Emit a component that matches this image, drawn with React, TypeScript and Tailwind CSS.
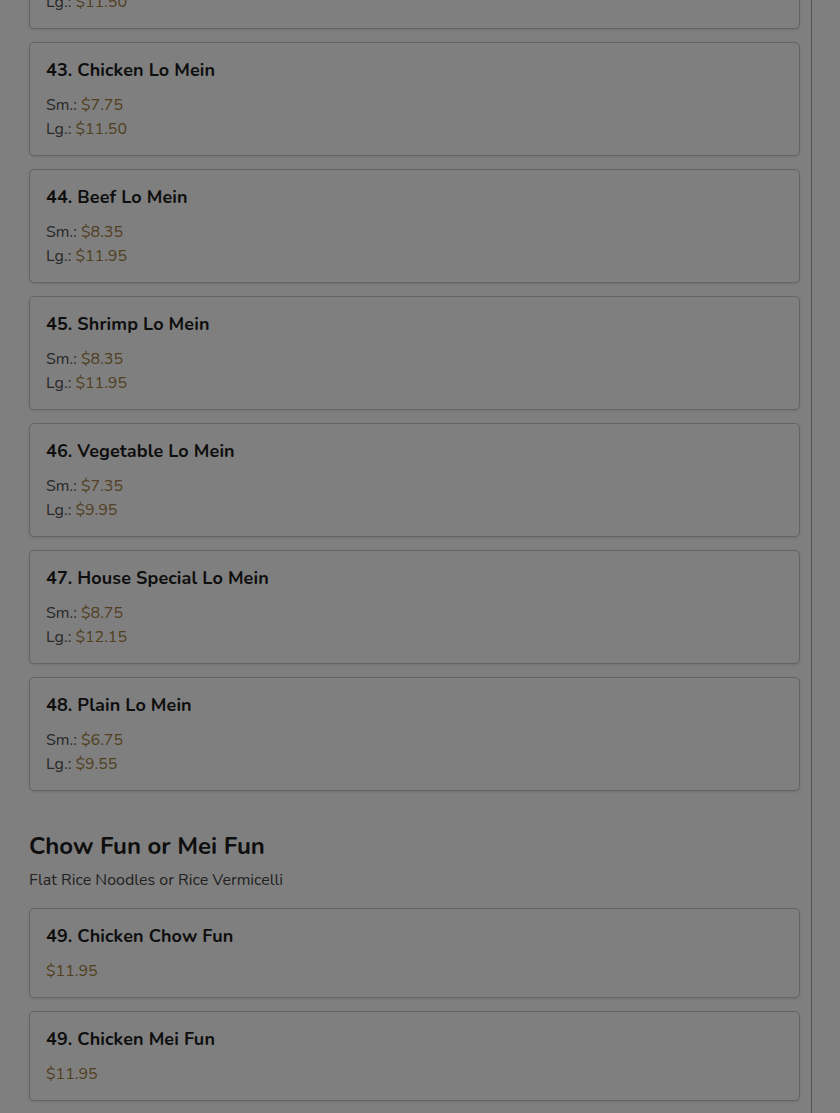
type Item = { name: string; sm?: string; lg?: string; price?: string };

const loMein: Item[] = [
  { name: '42. Roast Pork Lo Mein', sm: '$7.75', lg: '$11.50' },
  { name: '43. Chicken Lo Mein', sm: '$7.75', lg: '$11.50' },
  { name: '44. Beef Lo Mein', sm: '$8.35', lg: '$11.95' },
  { name: '45. Shrimp Lo Mein', sm: '$8.35', lg: '$11.95' },
  { name: '46. Vegetable Lo Mein', sm: '$7.35', lg: '$9.95' },
  { name: '47. House Special Lo Mein', sm: '$8.75', lg: '$12.15' },
  { name: '48. Plain Lo Mein', sm: '$6.75', lg: '$9.55' },
];

const chowFun: Item[] = [
  { name: '49. Chicken Chow Fun', price: '$11.95' },
  { name: '49. Chicken Mei Fun', price: '$11.95' },
];

function MenuCard({ item }: { item: Item }) {
  return (
    <div className="rounded-[5px] border border-[#c9c9c9] bg-white px-4 pt-[14px] pb-[14px] shadow-[0_1px_3px_rgba(0,0,0,0.12)]">
      <h3 className="text-[18px] leading-[26px] font-bold tracking-[0.1px] text-[#1c1c1c]">{item.name}</h3>
      <div className="mt-[10px] text-[16px] leading-[24px] text-[#505050]">
        {item.price ? (
          <div className="text-[#a3803f]">{item.price}</div>
        ) : (
          <>
            <div>
              Sm.: <span className="text-[#a3803f]">{item.sm}</span>
            </div>
            <div>
              Lg.: <span className="text-[#a3803f]">{item.lg}</span>
            </div>
          </>
        )}
      </div>
    </div>
  );
}

export default function App() {
  return (
    <div className="relative h-[1113px] overflow-hidden bg-white" style={{ fontFamily: 'Nunito, Lato, "Noto Sans", sans-serif' }}>
      <div className="flex h-full w-[812px] flex-col border-r border-[#aaa]">
        <div className="-mt-[85px] ml-[29px] w-[771px]">
          <div className="flex flex-col gap-[13px]">
            {loMein.map((item) => (
              <MenuCard key={item.name} item={item} />
            ))}
          </div>

          <h2 className="mt-[39px] text-[24px] leading-[32px] font-bold text-[#1c1c1c]">Chow Fun or Mei Fun</h2>
          <p className="mt-[6px] text-[16px] leading-[24px] text-[#444]">Flat Rice Noodles or Rice Vermicelli</p>

          <div className="mt-4 flex flex-col gap-[13px]">
            {chowFun.map((item) => (
              <MenuCard key={item.name} item={item} />
            ))}
          </div>
        </div>
      </div>

      {/* modal backdrop */}
      <div className="fixed inset-0 bg-black/50" />
    </div>
  );
}
